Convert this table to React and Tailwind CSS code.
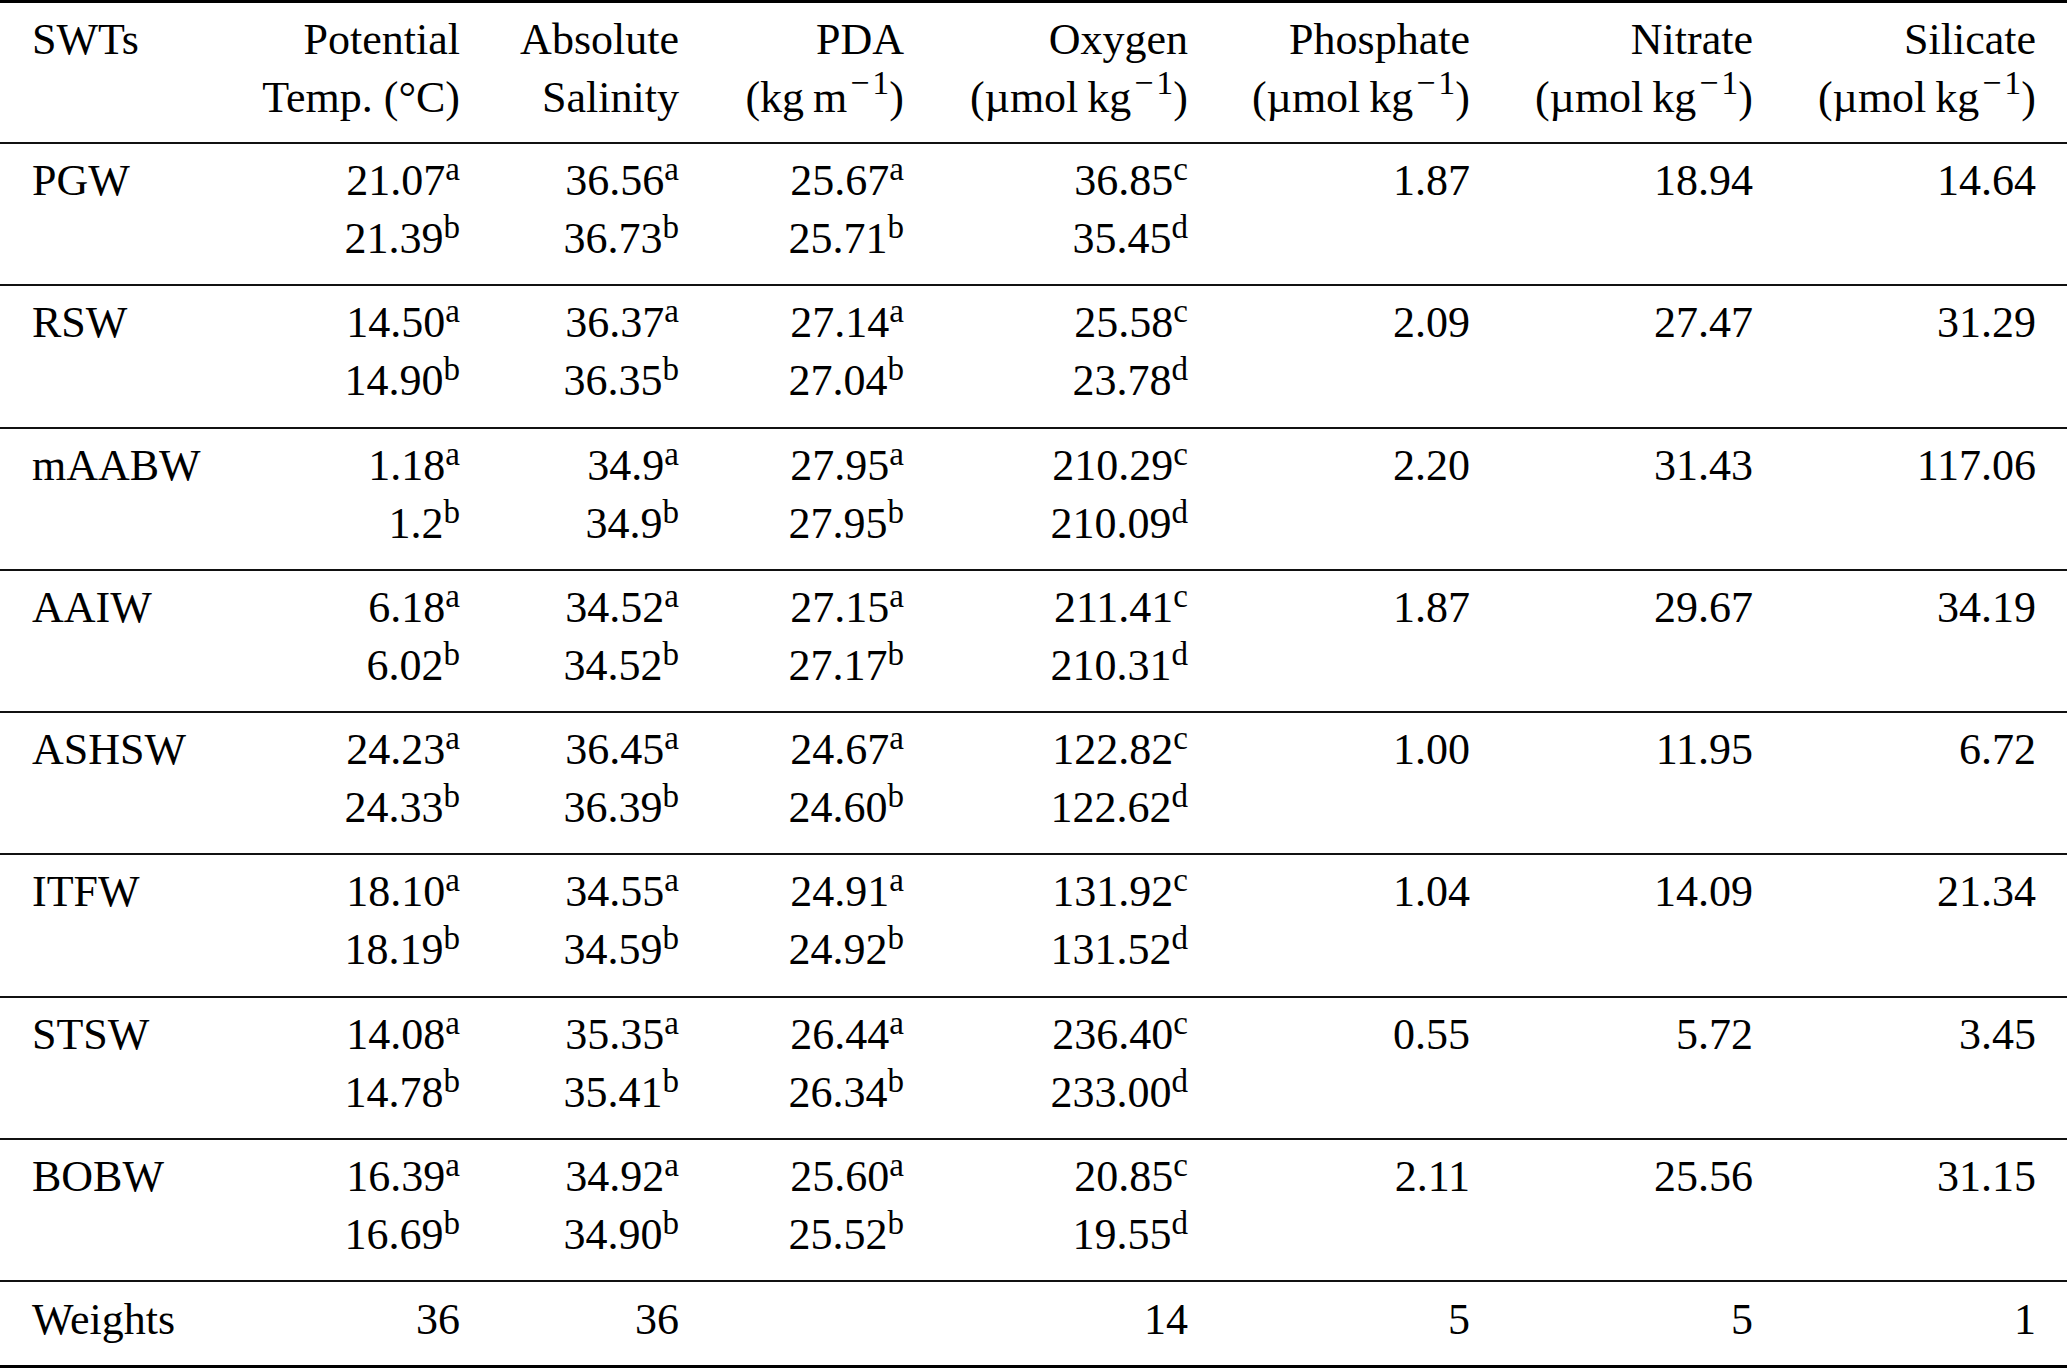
import React from 'react';

const rows = [
  ['PGW', ['21.07', 'a', '21.39', 'b'], ['36.56', 'a', '36.73', 'b'], ['25.67', 'a', '25.71', 'b'], ['36.85', 'c', '35.45', 'd'], '1.87', '18.94', '14.64'],
  ['RSW', ['14.50', 'a', '14.90', 'b'], ['36.37', 'a', '36.35', 'b'], ['27.14', 'a', '27.04', 'b'], ['25.58', 'c', '23.78', 'd'], '2.09', '27.47', '31.29'],
  ['mAABW', ['1.18', 'a', '1.2', 'b'], ['34.9', 'a', '34.9', 'b'], ['27.95', 'a', '27.95', 'b'], ['210.29', 'c', '210.09', 'd'], '2.20', '31.43', '117.06'],
  ['AAIW', ['6.18', 'a', '6.02', 'b'], ['34.52', 'a', '34.52', 'b'], ['27.15', 'a', '27.17', 'b'], ['211.41', 'c', '210.31', 'd'], '1.87', '29.67', '34.19'],
  ['ASHSW', ['24.23', 'a', '24.33', 'b'], ['36.45', 'a', '36.39', 'b'], ['24.67', 'a', '24.60', 'b'], ['122.82', 'c', '122.62', 'd'], '1.00', '11.95', '6.72'],
  ['ITFW', ['18.10', 'a', '18.19', 'b'], ['34.55', 'a', '34.59', 'b'], ['24.91', 'a', '24.92', 'b'], ['131.92', 'c', '131.52', 'd'], '1.04', '14.09', '21.34'],
  ['STSW', ['14.08', 'a', '14.78', 'b'], ['35.35', 'a', '35.41', 'b'], ['26.44', 'a', '26.34', 'b'], ['236.40', 'c', '233.00', 'd'], '0.55', '5.72', '3.45'],
  ['BOBW', ['16.39', 'a', '16.69', 'b'], ['34.92', 'a', '34.90', 'b'], ['25.60', 'a', '25.52', 'b'], ['20.85', 'c', '19.55', 'd'], '2.11', '25.56', '31.15'],
];

const weights = ['Weights', '36', '36', '', '14', '5', '5', '1'];

// column right edges follow the typeset table: 460, 679, 904, 1188, 1470, 1753, 2036
const gridCols = 'grid grid-cols-[168px_260px_219px_225px_284px_282px_283px_283px] pl-[32px] pr-[31px]';

const Sup = ({ children }) => (
  <span className="relative -top-[15px] text-[33px] leading-[0]">{children}</span>
);

// units like (kg m^-1); math minus is wider than the text one
const Unit = ({ children }) => (
  <>
    ({children}
    <span className="relative -top-[18px] text-[34px] leading-[0]">
      <span className="ml-[3px] mr-[3px]">−</span>1
    </span>
    )
  </>
);

const Rule = ({ thick }) => (
  <div className={thick ? 'h-[3px] bg-black' : 'h-[2px] bg-[#111]'}></div>
);

const headers = [
  ['Potential', 'Temp. (°C)'],
  ['Absolute', 'Salinity'],
  ['PDA', <Unit key="u">kg{'\u2009'}m</Unit>],
  ['Oxygen', <Unit key="u">µmol{'\u2009'}kg</Unit>],
  ['Phosphate', <Unit key="u">µmol{'\u2009'}kg</Unit>],
  ['Nitrate', <Unit key="u">µmol{'\u2009'}kg</Unit>],
  ['Silicate', <Unit key="u">µmol{'\u2009'}kg</Unit>],
];

const Cell = ({ value }) => {
  if (Array.isArray(value)) {
    return (
      <div className="text-right whitespace-nowrap">
        <div>
          {value[0]}
          <Sup>{value[1]}</Sup>
        </div>
        <div>
          {value[2]}
          <Sup>{value[3]}</Sup>
        </div>
      </div>
    );
  }
  return <div className="text-right whitespace-nowrap">{value}</div>;
};

const App = () => {
  return (
    <div className="w-[2067px] h-[1368px] bg-white text-black font-['Liberation_Serif',serif] text-[44px] leading-[58px] overflow-hidden">
      <Rule thick />
      <div className={`${gridCols} pt-[8px] pb-[15px]`}>
        <div>SWTs</div>
        {headers.map((h, i) => (
          <div key={i} className="text-right whitespace-nowrap">
            <div>{h[0]}</div>
            <div>{h[1]}</div>
          </div>
        ))}
      </div>

      {rows.map((row) => (
        <div key={row[0]}>
          <Rule />
          <div className={`${gridCols} pt-[8px] pb-[16.3px]`}>
            <div>{row[0]}</div>
            {row.slice(1).map((v, i) => (
              <Cell key={i} value={v} />
            ))}
          </div>
        </div>
      ))}

      <Rule />
      <div className={`${gridCols} pt-[9px] pb-[16px]`}>
        {weights.map((w, i) => (
          <div key={i} className={i === 0 ? '' : 'text-right'}>
            {w}
          </div>
        ))}
      </div>
      <Rule thick />
    </div>
  );
};

export default App;
